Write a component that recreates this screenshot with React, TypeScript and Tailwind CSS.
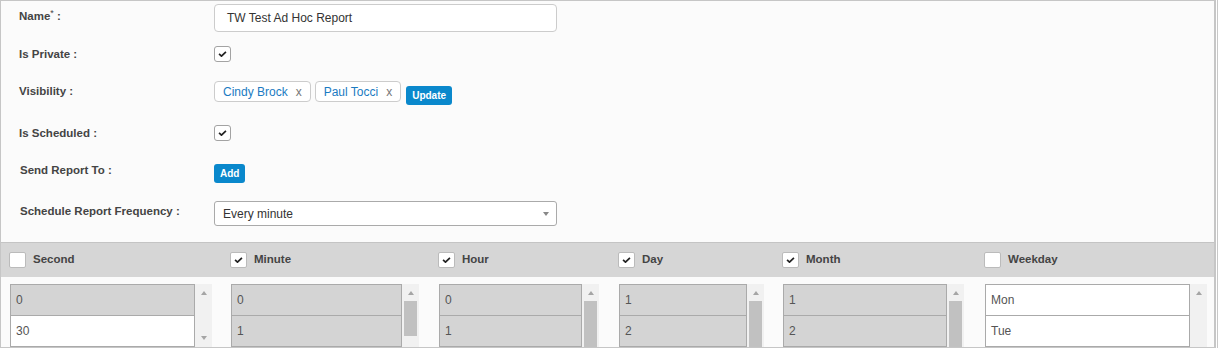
import React from "react";

type Col = {
  name: string;
  checked: boolean;
  colW: string;
  listW: string;
  items: string[];
  selected: boolean;
  thumb: "none" | "short" | "long";
};

const cols: Col[] = [
  { name: "Second", checked: false, colW: "w-[221px]", listW: "w-[202px]", items: ["0", "30"], selected: false, thumb: "none" },
  { name: "Minute", checked: true, colW: "w-[208px]", listW: "w-[188px]", items: ["0", "1"], selected: true, thumb: "short" },
  { name: "Hour", checked: true, colW: "w-[180px]", listW: "w-[160px]", items: ["0", "1"], selected: true, thumb: "long" },
  { name: "Day", checked: true, colW: "w-[164px]", listW: "w-[145px]", items: ["1", "2"], selected: true, thumb: "long" },
  { name: "Month", checked: true, colW: "w-[202px]", listW: "w-[181px]", items: ["1", "2"], selected: true, thumb: "long" },
  { name: "Weekday", checked: false, colW: "w-[225px]", listW: "w-[222px]", items: ["Mon", "Tue"], selected: false, thumb: "none" },
];

const Tick = () => (
  <svg viewBox="0 0 10 7" width="9" height="6">
    <path d="M1 3.4 L3.8 6 L9 0.9" fill="none" stroke="#222" strokeWidth="2" />
  </svg>
);

const FormCheck = () => (
  <div className="flex h-[16px] w-[17px] items-center justify-center rounded-[3px] border border-[#a3a3a3] bg-white">
    <Tick />
  </div>
);

const Label = ({ children, className = "" }: { children: React.ReactNode; className?: string }) => (
  <div className={"w-[195px] shrink-0 text-[11.5px] leading-[14px] font-bold text-[#444] " + className}>{children}</div>
);

const Chip = ({ name }: { name: string }) => (
  <div className="flex h-[21px] items-center rounded-[4px] border border-[#ccc] bg-white px-[8px] text-[12px]">
    <span className="text-[#1b7bc2]">{name}</span>
    <span className="ml-[8px] text-[#777]">x</span>
  </div>
);

const Arrow = ({ up }: { up: boolean }) => (
  <svg viewBox="0 0 6 4" width="6" height="4">
    <path d={up ? "M0 4 L3 0 L6 4 Z" : "M0 0 L3 4 L6 0 Z"} fill="#a5a5a5" />
  </svg>
);

const ListBox = ({ col }: { col: Col }) => (
  <div className={"flex h-[63px] " + col.listW}>
    <div className="flex-1 border border-b-0 border-[#aaa]">
      {col.items.map((it, i) => (
        <div
          key={it}
          className={
            "flex h-[31px] items-center border-b border-[#aaa] pl-[5px] text-[12px] text-[#555] " +
            (col.selected || (col.name === "Second" && i === 0) ? "bg-[#d4d4d4]" : "bg-white")
          }
        >
          {it}
        </div>
      ))}
      {col.name !== "Second" && (
        <div className={"h-[31px] " + (col.selected ? "bg-[#d4d4d4]" : "bg-white")} />
      )}
    </div>
    <div className="flex w-[17px] shrink-0 flex-col items-center bg-[#f1f1f1]">
      <div className="mt-[7px]">
        <Arrow up />
      </div>
      {col.thumb === "short" && <div className="mt-[6px] h-[35px] w-[13px] bg-[#c1c1c1]" />}
      {col.thumb === "long" && <div className="mt-[6px] h-[50px] w-[13px] bg-[#c1c1c1]" />}
      {col.name === "Second" && (
        <div className="mt-[41px]">
          <Arrow up={false} />
        </div>
      )}
    </div>
  </div>
);

export default function App() {
  return (
    <div className="flex h-[348px] w-[1219px] bg-white" style={{ fontFamily: '"Liberation Sans", Arial, sans-serif' }}>
      <div className="h-[348px] w-[1216px] overflow-hidden border border-r-2 border-[#c6c6c6] bg-[#fbfbfb]">
        <div className="flex flex-col pl-[18px]">
          <div className="mt-[3px] flex items-start">
            <Label className="mt-[5px]">
              Name<sup className="text-[9px] font-normal">*</sup> :
            </Label>
            <div className="flex h-[28px] w-[343px] items-center rounded-[4px] border border-[#ccc] bg-white pl-[12px] text-[12px] text-[#333]">
              TW Test Ad Hoc Report
            </div>
          </div>

          <div className="mt-[14px] flex items-start">
            <Label className="mt-[1px]">Is Private :</Label>
            <FormCheck />
          </div>

          <div className="mt-[19px] flex h-[21px] items-start">
            <Label className="mt-[3px]">Visibility :</Label>
            <div className="flex items-start gap-[4px]">
              <Chip name="Cindy Brock" />
              <Chip name="Paul Tocci" />
              <div className="ml-[1px] mt-[5px] flex h-[19px] items-center rounded-[3px] bg-[#0a88cc] px-[6px] text-[10px] font-bold text-white">
                Update
              </div>
            </div>
          </div>

          <div className="mt-[23px] flex items-start">
            <Label className="mt-[1px]">Is Scheduled :</Label>
            <FormCheck />
          </div>

          <div className="mt-[23px] flex items-start">
            <Label className="ml-px -mt-px">Send Report To :</Label>
            <div className="-ml-px flex h-[19px] items-center rounded-[3px] bg-[#0a88cc] px-[6px] text-[10px] font-bold text-white">
              Add
            </div>
          </div>

          <div className="mt-[18px] flex items-start">
            <Label className="ml-px mt-[3px]">Schedule Report Frequency :</Label>
            <div className="-ml-px flex h-[25px] w-[343px] items-center justify-between rounded-[3px] border border-[#aaa] bg-white pl-[8px] pr-[7px] text-[12px] text-[#333]">
              <span>Every minute</span>
              <svg viewBox="0 0 6 4" width="6" height="4">
                <path d="M0 0 L3 4 L6 0 Z" fill="#888" />
              </svg>
            </div>
          </div>
        </div>

        <div className="mt-[16px] flex h-[35px] items-center border-t border-[#c4c4c4] bg-[#d6d6d6] pl-[8px]">
          {cols.map((c) => (
            <div key={c.name} className={"flex shrink-0 items-center " + c.colW}>
              <div className="flex h-[16px] w-[17px] items-center justify-center rounded-[2px] border border-[#bbb] bg-white">
                {c.checked && <Tick />}
              </div>
              <span className="ml-[7px] text-[11.5px] font-bold text-[#444]">{c.name}</span>
            </div>
          ))}
        </div>

        <div className="mt-[7px] flex pl-[9px]">
          {cols.map((c) => (
            <div key={c.name} className={"shrink-0 " + c.colW}>
              <ListBox col={c} />
            </div>
          ))}
        </div>
      </div>
      <div className="ml-[1px] h-[348px] w-px bg-[#c8c8c8]" />
    </div>
  );
}
